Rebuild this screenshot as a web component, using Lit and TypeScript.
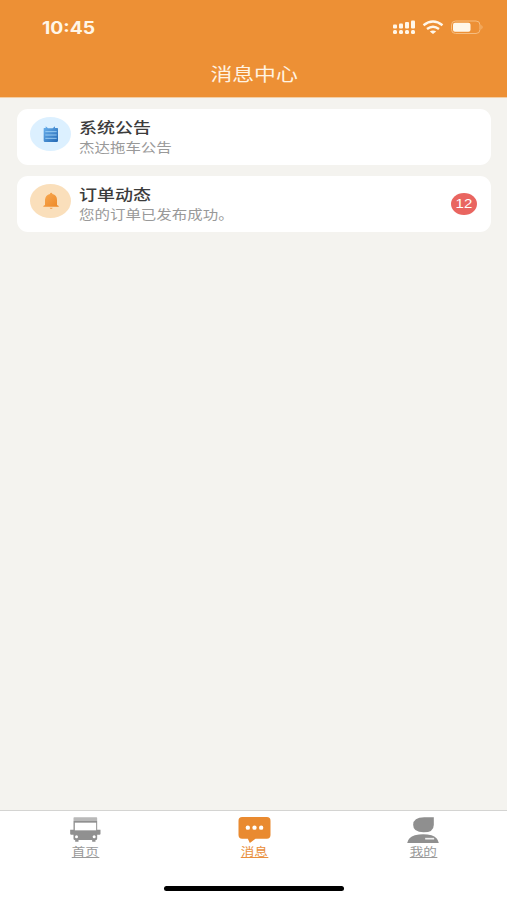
import { LitElement, html, css, svg } from "lit";
import { customElement } from "lit/decorators.js";
import { classMap } from "lit/directives/class-map.js";

const noticeIcon = html`<svg class="glyph" viewBox="0 0 48 54">
  <defs><linearGradient id="n" x1="0" y1="0" x2="1" y2="1"><stop offset="0" stop-color="#6bb2ee"/><stop offset="1" stop-color="#2368b4"/></linearGradient></defs>
  <path d="M3 9h5V4l7 6h14l7-6v5h7a2 2 0 0 1 2 2v36a4 4 0 0 1-4 4H6a4 4 0 0 1-4-4V10z" fill="url(#n)"/>
  <path d="M7 20h34M7 30h34M7 40h34" stroke="#a6d5f8" stroke-width="2.6"/>
</svg>`;

const bellIcon = html`<svg class="glyph" viewBox="0 0 48 54">
  <defs><linearGradient id="b" x1="0" y1="0" x2="1" y2="1"><stop offset="0" stop-color="#f7aa55"/><stop offset="1" stop-color="#ee8826"/></linearGradient></defs>
  <path d="M21 6q0-4 3.500-4t3.500 4q14 3 14 18v15l5 3v2H1v-2l5-3V24Q7 9 21 6z" fill="url(#b)"/>
  <path d="M20 47h9q-1 4-4.500 4T20 47z" fill="#f3a458"/>
</svg>`;

const truck = svg`
  <path d="M71 37h67q2 0 2 2v9H69v-9q0-2 2-2z" fill="#b9b9b9"/>
  <path d="M69 48h71v26h10v12q0 3-3 3h-7v12q0 4-4 4h-1v5h-10v-5H84v5H74v-5h-1q-4 0-4-4V89h-7q-3 0-3-3V74h10z" fill="#909090"/>
  <path d="M73 53h64v23H73z" fill="#fff"/>
  <circle cx="78" cy="95" r="4.500" fill="#fff"/><circle cx="131" cy="95" r="4.500" fill="#fff"/>`;
const chat = svg`
  <path d="M80 36h74q11 0 11 11v43q0 11-11 11h-34l-17 13-6-13H80q-11 0-11-11V47q0-11 11-11z" fill="#e98a30"/>
  <circle cx="97" cy="68" r="6.500" fill="#fff"/><circle cx="117" cy="68" r="6.500" fill="#fff"/><circle cx="137" cy="68" r="6.500" fill="#fff"/>`;
const person = svg`
  <path d="M145 37v22q0 23-31 23T83 60q0-23 33-23z" fill="#8f8f8f"/>
  <path d="M65 114q3-16 23-23 25-6 50 0 19 7 22 23z" fill="#8f8f8f"/>
  <path d="M119 101h27" stroke="#eee" stroke-width="5"/>`;

const messages = [
  { title: "系统公告", text: "杰达拖车公告", icon: noticeIcon, tone: "blue", count: 0 },
  { title: "订单动态", text: "您的订单已发布成功。", icon: bellIcon, tone: "orange", count: 12 },
];
const tabs = [
  { label: "首页", art: truck, box: "52.5 33 102 84", active: false },
  { label: "消息", art: chat, box: "64.5 33 102 84", active: true },
  { label: "我的", art: person, box: "61.5 33 102 84", active: false },
];

@customElement("app-root")
class AppRoot extends LitElement {
  static styles = css`
    :host { display: flex; flex-direction: column; height: 900px; background: #f4f3ef; overflow: hidden;
      font-family: "Liberation Sans", "Noto Sans CJK SC", sans-serif; }
    .header { height: 97px; flex: none; background: #ed9035; border-bottom: 1px solid #f3cfa6; box-sizing: content-box; color: #fff6e8; }
    .status { height: 54px; display: flex; justify-content: space-between; padding: 0 22px 0 42px; }
    .time { font: 650 16.800px/56px Inter, sans-serif; transform: scaleX(1.15); transform-origin: left; }
    .signals { width: 93px; height: 54px; }
    .title { display: flex; justify-content: center; padding-left: 1px; font: 400 18.2px/38px "Noto Sans CJK SC", sans-serif; transform: scaleX(1.2); color: #fff3e2; }
    .list { flex: 1; display: flex; flex-direction: column; gap: 11px; padding: 11px 16px 0 17px; }
    .card { height: 56px; border-radius: 11px; background: #fff; display: flex; padding: 0 14px 0 13px; box-sizing: border-box; }
    .disc { width: 41px; height: 34px; margin-top: 8px; border-radius: 50%; display: flex; align-items: center; justify-content: center; flex: none; }
    .blue { background: #dcf0ff; }
    .orange { background: #fadfbb; }
    .glyph { width: 16px; height: 18px; }
    .copy { flex: 1; padding: 9px 0 0 8px; white-space: nowrap; }
    .name, .detail { transform: scaleX(1.2); transform-origin: left; }
    .name { font-size: 15px; line-height: 20px; color: #3c3c3c; font-weight: 500; }
    .detail { font-size: 12.9px; line-height: 19px; color: #999; }
    .badge { width: 26px; height: 22px; margin-top: 17px; border-radius: 50%; background: #e96560; color: #fff;
      display: flex; align-items: center; justify-content: center; font-size: 12.5px; }
    .num { transform: scaleX(1.2); }
    .footer { flex: none; height: 90px; box-sizing: border-box; border-top: 1px solid #d4d4d2; background: #fff; display: flex; flex-direction: column; align-items: center; }
    .tabs { display: flex; width: 100%; height: 74px; }
    .tab { flex: 1; display: flex; flex-direction: column; align-items: center; padding-top: 5px; color: #999; }
    .tab.active { color: #e98f3c; }
    .art { width: 34px; height: 28px; display: block; }
    .label { font-size: 11.3px; line-height: 15px; transform: scaleX(1.2); border-bottom: 1px solid currentColor; height: 12px; margin: 1px 0 0 1px; }
    .label span { display: block; }
    .home { width: 180px; height: 5px; margin-top: 1px; border-radius: 3px; background: #000; }
  `;

  render() {
    return html`
      <div class="header">
        <div class="status">
          <div class="time">10:45</div>
          <svg class="signals" viewBox="392 0 93 54" fill="#fff7ea">
            <rect x="393" y="24.500" width="4" height="4" rx="1"/><rect x="399" y="23.500" width="4" height="5" rx="1"/>
            <rect x="405" y="22" width="4" height="6.500" rx="1"/><rect x="411" y="20.500" width="4" height="8" rx="1"/>
            <rect x="393" y="30" width="4" height="4" rx="1.500"/><rect x="399" y="30" width="4" height="4" rx="1.500"/>
            <rect x="405" y="30" width="4" height="4" rx="1.500"/><rect x="411" y="30" width="4" height="4" rx="1.500"/>
            <g fill="none" stroke="#fff7ea" stroke-width="2.400"><path d="M423.500 25.200q9.500-7.200 19 0"/><path d="M427 29q6-4.600 12 0"/></g>
            <path d="M429.800 31.500q3.200-2.200 6.400 0L433 34z"/>
            <rect x="451.500" y="21" width="28.500" height="12.500" rx="4" fill="none" stroke="#f6bd80"/>
            <rect x="453" y="22.800" width="17.500" height="9" rx="2"/><path d="M481.500 25q2 2.200 0 4.500z" fill="#f6bd80"/>
          </svg>
        </div>
        <div class="title">消息中心</div>
      </div>
      <div class="list">
        ${messages.map((m) => html`<div class="card">
          <div class="disc ${m.tone}">${m.icon}</div>
          <div class="copy"><div class="name">${m.title}</div><div class="detail">${m.text}</div></div>
          ${m.count ? html`<div class="badge"><span class="num">${m.count}</span></div>` : ""}
        </div>`)}
      </div>
      <div class="footer">
        <div class="tabs">
          ${tabs.map((t) => html`<div class=${classMap({ tab: true, active: t.active })}>
            <svg class="art" viewBox=${t.box}>${t.art}</svg>
            <div class="label"><span>${t.label}</span></div>
          </div>`)}
        </div>
        <div class="home"></div>
      </div>`;
  }
}
